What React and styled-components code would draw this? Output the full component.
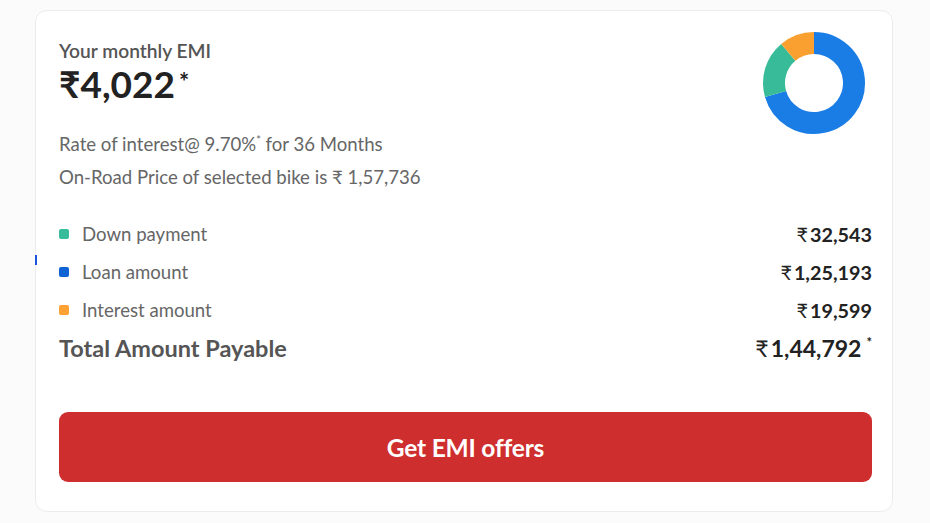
import React from "react";
import styled, { createGlobalStyle } from "styled-components";

const Global = createGlobalStyle`
  html, body { margin: 0; padding: 0; background: #fbfbfb; }
  body { font-family: Lato, "Open Sans", "DejaVu Sans", sans-serif; }
`;

const Page = styled.div`
  position: relative;
  width: 930px;
  height: 523px;
  padding: 10px 0 0 35px;
  box-sizing: border-box;
`;

const Card = styled.div`
  width: 858px;
  height: 502px;
  box-sizing: border-box;
  background: #fff;
  border: 1px solid #ececec;
  border-radius: 12px;
  padding: 20px 20px 0 23px;
  display: flex;
  flex-direction: column;
`;

const Top = styled.div`
  display: flex;
  justify-content: space-between;
  align-items: flex-start;
`;

const Left = styled.div`
  display: flex;
  flex-direction: column;
  padding-top: 9px;
`;

const Label = styled.div`
  font-size: 19.2px;
  line-height: 21px;
  font-weight: 600;
  color: #555;
`;

const Emi = styled.div`
  font-size: 37px;
  line-height: 46px;
  font-weight: 700;
  color: #222;
  display: flex;
  align-items: flex-start;
`;

const Sup = styled.span`
  font-size: ${(p) => p.$size || 18}px;
  line-height: 1;
  margin-left: ${(p) => p.$gap || 3}px;
  margin-top: ${(p) => p.$top || 2}px;
`;

const Info = styled.div`
  margin-top: 16px;
  font-size: 18.6px;
  line-height: 33px;
  color: #666;
`;

const Star = styled.sup`
  font-size: 11px;
`;

const Donut = styled.svg`
  margin-right: 6px;
`;

const Rows = styled.div`
  margin-top: 21px;
  display: flex;
  flex-direction: column;
`;

const Row = styled.div`
  display: flex;
  justify-content: space-between;
  align-items: center;
  height: 38px;
`;

const Name = styled.div`
  display: flex;
  align-items: center;
  gap: 13px;
  font-size: 18.6px;
  color: #666;
`;

const Dot = styled.span`
  width: 10px;
  height: 10px;
  border-radius: 2px;
  background: ${(p) => p.$c};
`;

const Value = styled.div`
  font-size: 19.8px;
  font-weight: 700;
  color: #222;
  display: flex;
  align-items: flex-start;
`;

const Rupee = styled.span`
  font-weight: 400;
  margin-right: 2px;
`;

const TotalName = styled.div`
  font-size: 23.5px;
  font-weight: 700;
  color: #555;
`;

const TotalValue = styled(Value)`
  font-size: 23px;
`;

const Button = styled.button`
  margin-top: 45px;
  height: 70px;
  width: 100%;
  border: none;
  border-radius: 9px;
  background: #cf2e2e;
  color: #fff;
  font-family: Lato, sans-serif;
  font-size: 24.5px;
  font-weight: 700;
  letter-spacing: -0.2px;
  cursor: pointer;
`;

const Caret = styled.span`
  position: absolute;
  left: 35px;
  top: 255px;
  width: 2px;
  height: 10px;
  background: #1a55e0;
`;

function arc(cx, cy, r, a0, a1) {
  const p = (a) => {
    const rad = ((a - 90) * Math.PI) / 180;
    return [cx + r * Math.cos(rad), cy + r * Math.sin(rad)];
  };
  const [x0, y0] = p(a0);
  const [x1, y1] = p(a1);
  const large = a1 - a0 > 180 ? 1 : 0;
  return `M ${x0} ${y0} A ${r} ${r} 0 ${large} 1 ${x1} ${y1}`;
}

const segs = [
  { c: "#1a7de6", a0: 0, a1: 254 },
  { c: "#37bb98", a0: 254, a1: 320 },
  { c: "#f9a030", a0: 320, a1: 360 },
];

export default function App() {
  return (
    <>
      <Global />
      <Page>
        <Caret />
        <Card>
          <Top>
            <Left>
              <Label>Your monthly EMI</Label>
              <Emi>
                ₹4,022<Sup $size={24} $gap={4} $top={9}>*</Sup>
              </Emi>
              <Info>
                Rate of interest@ 9.70%<Star>*</Star> for 36 Months
                <br />
                On-Road Price of selected bike is ₹ 1,57,736
              </Info>
            </Left>
            <Donut width="104" height="104" viewBox="0 0 104 104">
              {segs.map((s) => (
                <path
                  key={s.c}
                  d={arc(52, 52, 40, s.a0, s.a1 - 0.01)}
                  fill="none"
                  stroke={s.c}
                  strokeWidth="22"
                />
              ))}
            </Donut>
          </Top>
          <Rows>
            <Row>
              <Name><Dot $c="#36bc9b" />Down payment</Name>
              <Value><Rupee>₹</Rupee>32,543</Value>
            </Row>
            <Row>
              <Name><Dot $c="#0d63d1" />Loan amount</Name>
              <Value><Rupee>₹</Rupee>1,25,193</Value>
            </Row>
            <Row>
              <Name><Dot $c="#ffa133" />Interest amount</Name>
              <Value><Rupee>₹</Rupee>19,599</Value>
            </Row>
            <Row>
              <TotalName>Total Amount Payable</TotalName>
              <TotalValue>
                <Rupee>₹</Rupee>1,44,792<Sup $size={13} $gap={5} $top={0}>*</Sup>
              </TotalValue>
            </Row>
          </Rows>
          <Button>Get EMI offers</Button>
        </Card>
      </Page>
    </>
  );
}
